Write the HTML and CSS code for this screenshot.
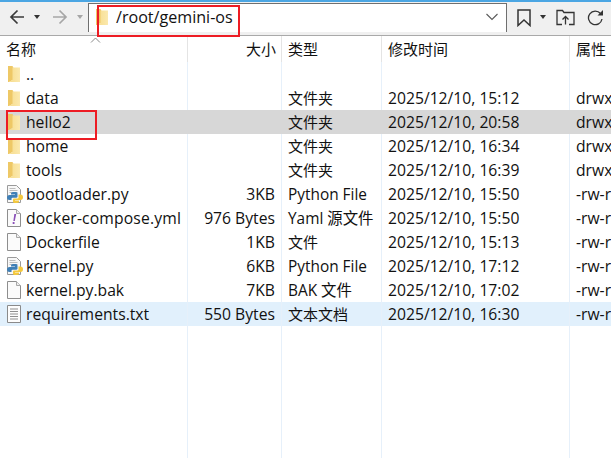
FILE: index.html
```html
<!DOCTYPE html>
<html lang="zh">
<head>
<meta charset="utf-8">
<title>/root/gemini-os</title>
<link rel="stylesheet" href="styles.css">
</head>
<body>
<svg class="defs" width="0" height="0" aria-hidden="true">
  <defs>
    <linearGradient id="fold" x1="0" y1="0" x2="1" y2="0">
      <stop offset="0" stop-color="#f7dc8c"/>
      <stop offset="1" stop-color="#fbe9ae"/>
    </linearGradient>
    <symbol id="folder" viewBox="0 0 16 18">
      <path d="M2 1h4.500l1 2v11.500L3 17H2z" fill="#eec866"/>
      <path d="M6.500 2.500H14V17H3l3.500-2z" fill="url(#fold)"/>
    </symbol>
    <symbol id="blank" viewBox="0 0 16 20">
      <path d="M1.500 1.500h9l4 4v13h-13z" fill="#fbfbfb" stroke="#8e8e8e"/>
      <path d="M10.500 1.500v4h4" fill="#eee" stroke="#a8a8a8"/>
    </symbol>
    <symbol id="python" viewBox="0 0 18 20">
      <path d="M1.500 1.500h9l4 4v13h-13z" fill="#f8f8f8" stroke="#9a9a9a"/>
      <path d="M3.500 4.500h6M3.500 6.500h8M3.500 8.500h8" stroke="#bdbdbd"/>
      <path d="M5 9.500Q5 8 7 8h3q1.500 0 1.500 1.500v3.200q0 1-1.500 1H6.500q-1 0-1 1V16H3.500q-2.500 0-2.500-2.500T3.500 11H9v-.5H5z" fill="#3f7fb6"/>
      <path d="M12.500 10.500H14.500q2.500 0 2.500 2.800T14.500 16H9v.5h4v1.200q0 1.300-2.500 1.300h-2Q7 19 7 17.500v-2q0-1 1-1h3.500q1 0 1-1z" fill="#f5c93e"/>
    </symbol>
    <symbol id="yaml" viewBox="0 0 16 20">
      <path d="M1.500 1.500h9l4 4v13h-13z" fill="#fbfbfb" stroke="#8e8e8e"/>
      <path d="M10.500 1.500v4h4" fill="#eee" stroke="#a8a8a8"/>
      <path d="M8.300 6h1.900l-1.400 7H7.400z" fill="#8a4fb8"/>
      <rect x="6.700" y="14" width="1.800" height="2" fill="#8a4fb8"/>
    </symbol>
    <symbol id="text" viewBox="0 0 16 20">
      <path d="M1.500 1.500h13v17h-13z" fill="#fdfdfd" stroke="#8a8a8a"/>
      <path d="M4 5h8M4 7.500h8M4 10h8M4 12.500h8M4 15h8" stroke="#8f8f8f"/>
    </symbol>
  </defs>
</svg>

<div class="accent"></div>
<header class="toolbar">
  <button class="tool back" aria-label="后退">
    <svg width="16" height="16" viewBox="0 0 16 16"><path d="M15 8H2M8.500 1.500 2 8l6.500 6.500" fill="none" stroke="#3a3a3a" stroke-width="1.700"/></svg>
  </button>
  <span class="caret"></span>
  <button class="tool forward" aria-label="前进">
    <svg width="16" height="16" viewBox="0 0 16 16"><path d="M1 8h13M7.500 1.500 14 8l-6.500 6.500" fill="none" stroke="#a6a6a6" stroke-width="1.700"/></svg>
  </button>
  <span class="caret dim"></span>
  <div class="address">
    <svg class="addr-folder" width="16" height="18"><use href="#folder"/></svg>
    <span class="path">/root/gemini-os</span>
    <svg class="chevron" width="14" height="8" viewBox="0 0 14 8"><path d="M1.500 1 7 6.500 12.500 1" fill="none" stroke="#5a5a5a" stroke-width="1.100"/></svg>
  </div>
  <button class="tool bookmark" aria-label="书签">
    <svg width="14" height="18" viewBox="0 0 14 18"><path d="M1 1h12v15.500L7 11l-6 5.500z" fill="none" stroke="#333" stroke-width="1.500"/></svg>
  </button>
  <span class="caret"></span>
  <button class="tool up" aria-label="上级目录">
    <svg width="19" height="17" viewBox="0 0 19 17"><path d="M6 15.500H1v-14h5.500L8 3.500h10v12h-5" fill="none" stroke="#333" stroke-width="1.300"/><path d="M9.500 15.500V8M6.500 10.500l3-3 3 3" fill="none" stroke="#333" stroke-width="1.300"/></svg>
  </button>
  <button class="tool refresh" aria-label="刷新">
    <svg width="17" height="17" viewBox="0 0 17 17"><path d="M13.500 4.500A6.800 6.800 0 1 0 15 10" fill="none" stroke="#333" stroke-width="1.300"/><path d="M10.500 6.500H16V1z" fill="#333"/></svg>
  </button>
</header>

<main class="list">
  <div class="row head">
    <span class="c name">名称<svg class="sort" width="11" height="6" viewBox="0 0 11 6"><path d="M1 5.500 5.500 1 10 5.500" fill="none" stroke="#8a8a8a"/></svg></span>
    <span class="c size">大小</span>
    <span class="c type">类型</span>
    <span class="c date">修改时间</span>
    <span class="c attr">属性</span>
  </div>
  <div class="row"><span class="c name"><svg class="ico" width="16" height="18"><use href="#folder"/></svg>..</span><span class="c size"></span><span class="c type"></span><span class="c date"></span><span class="c attr"></span></div>
  <div class="row"><span class="c name"><svg class="ico" width="16" height="18"><use href="#folder"/></svg>data</span><span class="c size"></span><span class="c type">文件夹</span><span class="c date">2025/12/10, 15:12</span><span class="c attr">drwx</span></div>
  <div class="row selected"><span class="c name"><svg class="ico" width="16" height="18"><use href="#folder"/></svg>hello2</span><span class="c size"></span><span class="c type">文件夹</span><span class="c date">2025/12/10, 20:58</span><span class="c attr">drwx</span></div>
  <div class="row"><span class="c name"><svg class="ico" width="16" height="18"><use href="#folder"/></svg>home</span><span class="c size"></span><span class="c type">文件夹</span><span class="c date">2025/12/10, 16:34</span><span class="c attr">drwx</span></div>
  <div class="row"><span class="c name"><svg class="ico" width="16" height="18"><use href="#folder"/></svg>tools</span><span class="c size"></span><span class="c type">文件夹</span><span class="c date">2025/12/10, 16:39</span><span class="c attr">drwx</span></div>
  <div class="row"><span class="c name"><svg class="ico py" width="18" height="20"><use href="#python"/></svg>bootloader.py</span><span class="c size">3KB</span><span class="c type wide">Python File</span><span class="c date">2025/12/10, 15:50</span><span class="c attr">-rw-r</span></div>
  <div class="row"><span class="c name"><svg class="ico" width="16" height="20"><use href="#yaml"/></svg><span class="long">docker-compose.yml</span></span><span class="c size">976 Bytes</span><span class="c type wide">Yaml 源文件</span><span class="c date">2025/12/10, 15:50</span><span class="c attr">-rw-r</span></div>
  <div class="row"><span class="c name"><svg class="ico" width="16" height="20"><use href="#blank"/></svg>Dockerfile</span><span class="c size">1KB</span><span class="c type">文件</span><span class="c date">2025/12/10, 15:13</span><span class="c attr">-rw-r</span></div>
  <div class="row"><span class="c name"><svg class="ico py" width="18" height="20"><use href="#python"/></svg>kernel.py</span><span class="c size">6KB</span><span class="c type wide">Python File</span><span class="c date">2025/12/10, 17:12</span><span class="c attr">-rw-r</span></div>
  <div class="row"><span class="c name"><svg class="ico" width="16" height="20"><use href="#blank"/></svg>kernel.py.bak</span><span class="c size">7KB</span><span class="c type wide">BAK 文件</span><span class="c date">2025/12/10, 17:02</span><span class="c attr">-rw-r</span></div>
  <div class="row hover"><span class="c name"><svg class="ico" width="16" height="20"><use href="#text"/></svg>requirements.txt</span><span class="c size">550 Bytes</span><span class="c type">文本文档</span><span class="c date">2025/12/10, 16:30</span><span class="c attr">-rw-r</span></div>
  <div class="filler"><span></span><span></span><span></span><span></span><span></span></div>
</main>

<div class="mark mark-path"></div>
<div class="mark mark-row"></div>
</body>
</html>
```
FILE: styles.css
```css
* { box-sizing: border-box; }
html, body { margin: 0; padding: 0; }
body {
  position: relative;
  width: 611px;
  height: 458px;
  overflow: hidden;
  background: #fff;
  color: #111;
  font: 15.7px/24px "Open Sans", "Noto Sans CJK SC", sans-serif;
  display: flex;
  flex-direction: column;
}
.defs { position: absolute; }
.accent { height: 2px; background: #4ba6e3; flex: none; }
.toolbar {
  flex: none;
  height: 34px;
  background: #f0f0f0;
  border-bottom: 1px solid #a9a9a9;
  display: flex;
  align-items: flex-start;
  padding-left: 9px;
  white-space: nowrap;
}
.tool {
  border: 0;
  padding: 0;
  background: none;
  display: flex;
  margin-top: 7px;
}
.caret {
  flex: none;
  width: 0;
  height: 0;
  margin: 13px 0 0 9px;
  border: 3.5px solid transparent;
  border-top: 4px solid #333;
  border-bottom: 0;
}
.caret.dim { border-top-color: #a6a6a6; }
.forward { margin-left: 12px; }
.address {
  flex: none;
  width: 419px;
  height: 29px;
  margin: 1px 0 0 5px;
  background: #fff;
  border: 1px solid #6f6f6f;
  border-bottom: 0;
  display: flex;
  align-items: center;
  padding: 0 7px 2px 5px;
}
.addr-folder { flex: none; }
.path { margin-left: 6px; flex: 1; font-size: 16.1px; }
.bookmark { margin-left: 10px; }
.up { margin-left: 10px; margin-top: 7px; }
.refresh { margin-left: 12px; }

.list { flex: 1; display: flex; flex-direction: column; min-height: 0; }
.row, .filler {
  display: grid;
  grid-template-columns: 188px 94px 100px 188px 1fr;
  flex: none;
}
.row { height: 24px; }
.head { height: 26px; line-height: 26px; font-size: 15px; }
.head .c { border-right-color: #e4e4e4; }
.head .size { padding-right: 5px; }
.c {
  border-right: 1px solid #e6f0fa;
  padding-left: 6px;
  white-space: nowrap;
  overflow: hidden;
  display: flex;
  align-items: center;
}
.name { position: relative; overflow: visible; }
.size { justify-content: flex-end; padding: 0 6px 0 0; }
.type { font-size: 15px; }
.wide { font-size: 15.4px; padding-top: 1px; }
.attr { border-right: 0; }
.ico { flex: none; margin-right: 4px; }
.ico.py { margin-right: 2px; }
.long { letter-spacing: 0.15px; }
.sort { position: absolute; left: 90px; top: 1px; }
.selected { background: #d7d7d7; }
.selected .c { border-right-color: #d7d7d7; }
.hover { background: #e1f0fc; }
.filler { flex: 1; }
.filler span { border-right: 1px solid #e6f0fa; }
.filler span:last-child { border-right: 0; }

.mark { position: absolute; border: 2px solid #ed1c24; pointer-events: none; }
.mark-path { left: 97px; top: 5px; width: 143px; height: 32px; }
.mark-row { left: 6px; top: 110px; width: 91px; height: 30px; }
```
